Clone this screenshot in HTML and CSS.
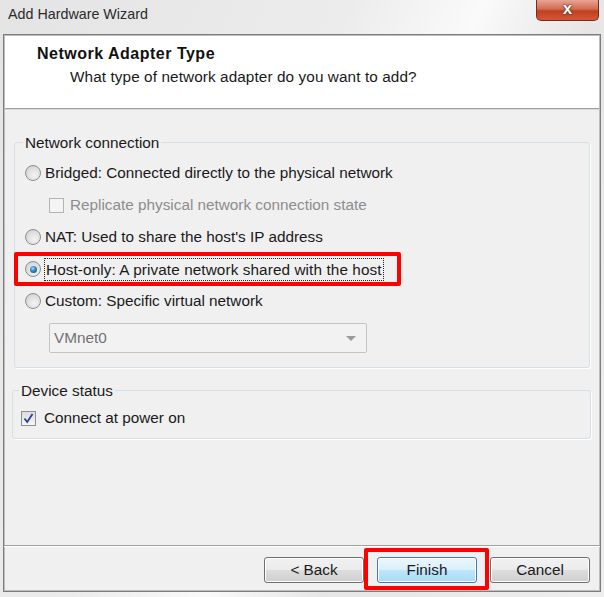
FILE: index.html
```html
<!DOCTYPE html>
<html lang="en">

<head>
	<meta charset="UTF-8">
	<title>Add Hardware Wizard</title>
	<link rel="stylesheet" href="styles.css">
</head>

<body>
	<div class="window">
		<div class="titlebar">
			<span class="title">Add Hardware Wizard</span>
			<div class="close">x</div>
		</div>

		<div class="frame">
			<div class="header">
				<div class="heading">Network Adapter Type</div>
				<div class="subheading">What type of network adapter do you want to add?</div>
			</div>

			<div class="content">
				<fieldset class="group">
					<legend>Network connection</legend>
					<label class="option"><span class="radio"></span>Bridged: Connected directly to the physical network</label>
					<label class="option sub disabled"><span class="check"></span>Replicate physical network connection state</label>
					<label class="option"><span class="radio"></span>NAT: Used to share the host's IP address</label>
					<label class="option marked"><span class="radio on"></span><span class="focus">Host-only: A private network shared with the host</span></label>
					<label class="option"><span class="radio"></span>Custom: Specific virtual network</label>
					<div class="select">
						<span>VMnet0</span>
						<span class="arrow"></span>
					</div>
				</fieldset>

				<fieldset class="group device">
					<legend>Device status</legend>
					<label class="option">
						<span class="check on">
							<svg width="11" height="11" viewBox="0 0 11 11"><path d="M1.5 5.5 L4.2 9 L9.5 1" fill="none" stroke="#2a3f8c" stroke-width="1.8"/></svg>
						</span>Connect at power on
					</label>
				</fieldset>
			</div>

			<div class="footer">
				<button>&lt; Back</button>
				<button class="default marked">Finish</button>
				<button>Cancel</button>
			</div>
		</div>
	</div>
</body>

</html>
```

FILE: styles.css
```css
body {
	margin: 0;
	font-family: "Liberation Sans", Arial, sans-serif;
	font-size: 15.3px;
	color: #1a1a1a;
	background: #eeeeee;
}

.window {
	width: 604px;
	height: 597px;
	display: flex;
	flex-direction: column;
	background: linear-gradient(115deg, #e4e4e4 0%, #ececec 40%, #fafafa 55%, #e6e6e6 68%, #eeeeee 100%);
}

.titlebar {
	height: 34px;
	flex: none;
	display: flex;
	align-items: flex-start;
	justify-content: space-between;
}

.title {
	margin: 6px 0 0 8px;
	font-size: 14.3px;
	color: #2b2b2b;
}

.close {
	width: 63px;
	height: 21px;
	margin-right: 5px;
	box-sizing: border-box;
	border: 1px solid #7a2a1c;
	border-top: none;
	border-radius: 0 0 5px 5px;
	background: linear-gradient(#e8a493 0%, #d26c52 45%, #c1401f 55%, #d0583a 100%);
	color: #fff;
	font-weight: bold;
	font-size: 17px;
	line-height: 18px;
	text-align: center;
	text-shadow: 0 0 2px #3a1a10, 0 0 1px #3a1a10;
}

.frame {
	flex: 1;
	margin: 0 3px 5px 3px;
	display: flex;
	flex-direction: column;
	border: 1px solid #7d7d7d;
	box-shadow: inset 1px 1px 0 #bdbdbd, inset -1px -1px 0 #bdbdbd;
	background: #f0f0f0;
}

.header {
	height: 73px;
	box-sizing: border-box;
	padding: 8px 0 0 32px;
	margin: 1px 1px 0 1px;
	background: #fff;
	border-bottom: 1px solid #a0a0a0;
	box-shadow: 0 1px 0 #d8d8d8;
}

.heading {
	font-weight: bold;
	font-size: 16px;
	letter-spacing: 0.5px;
	line-height: 19px;
	color: #111;
}

.subheading {
	margin: 4px 0 0 33px;
	line-height: 19px;
	letter-spacing: 0.1px;
}

.content {
	flex: 1;
	padding: 25px 10px 0 10px;
}

.group {
	margin: 0;
	padding: 6px 0 14px 10px;
	border: 1px solid #d5dfe5;
	border-radius: 3px;
	box-shadow: 1px 1px 0 #fff;
}

.group legend {
	padding: 0 2px;
	margin-left: -2px;
	line-height: 17px;
}

.device {
	margin: 14px -1px 0 -2px;
	padding: 3px 0 4px 8px;
}

.device .option {
	gap: 8px;
}

.option {
	height: 32px;
	display: flex;
	align-items: center;
	gap: 4px;
	position: relative;
}

.option.sub {
	padding-left: 24px;
	gap: 6px;
}

.disabled {
	color: #8d8d8d;
}

.radio {
	width: 14px;
	height: 14px;
	flex: none;
	border: 1px solid #8e8f8f;
	border-radius: 50%;
	background: radial-gradient(circle at 60% 65%, #f4f4f4 0%, #dcdcdc 60%, #c9c9c9 100%);
	display: flex;
	align-items: center;
	justify-content: center;
}

.radio.on::after {
	content: "";
	width: 7px;
	height: 7px;
	border-radius: 50%;
	background: radial-gradient(circle at 40% 35%, #9fd3f2 0%, #2b86c5 45%, #0d3f6d 100%);
}

.check {
	width: 13px;
	height: 13px;
	flex: none;
	border: 1px solid #b4b4b4;
	background: #f4f4f4;
	display: flex;
	align-items: center;
	justify-content: center;
}

.check.on {
	border-color: #8e8f8f;
	background: linear-gradient(#dcdcdc, #f6f6f6);
}

.focus {
	outline: 1px dotted #222;
	padding: 0 1px;
	line-height: 21px;
	letter-spacing: 0.1px;
}

.marked::after {
	content: "";
	position: absolute;
	border: 4px solid #f00;
	border-radius: 2px;
	left: -11px;
	right: 188px;
	top: -1px;
	bottom: -1px;
}

.select {
	margin: 6px 0 0 24px;
	width: 318px;
	height: 30px;
	box-sizing: border-box;
	border: 1px solid #c4c4c4;
	border-radius: 2px;
	background: #f2f2f2;
	color: #727272;
	display: flex;
	align-items: center;
	justify-content: space-between;
	padding: 0 10px 0 4px;
}

.arrow {
	width: 0;
	height: 0;
	border-left: 5px solid transparent;
	border-right: 5px solid transparent;
	border-top: 5px solid #9a9a9a;
}

.footer {
	height: 46px;
	flex: none;
	box-sizing: border-box;
	border-top: 1px solid #a0a0a0;
	box-shadow: inset 0 1px 0 #fff;
	display: flex;
	justify-content: flex-end;
	align-items: flex-start;
	gap: 13px;
	padding: 11px 10px 0 0;
}

button {
	position: relative;
	width: 100px;
	height: 26px;
	font-family: inherit;
	font-size: 15.3px;
	color: #1a1a1a;
	border: 1px solid #707070;
	border-radius: 3px;
	background: linear-gradient(#f2f2f2 0%, #ebebeb 48%, #dddddd 52%, #cfcfcf 100%);
	box-shadow: inset 0 0 0 1px #fcfcfc;
}

button.default {
	border-color: #3c7fb1;
	background: linear-gradient(#eaf6fd 0%, #d9f0fc 48%, #bee6fd 52%, #a7d9f5 100%);
	box-shadow: inset 0 0 0 1px #ffffff;
}

button.marked::after {
	left: -14px;
	right: -13px;
	top: -10px;
	bottom: -8px;
}
```
